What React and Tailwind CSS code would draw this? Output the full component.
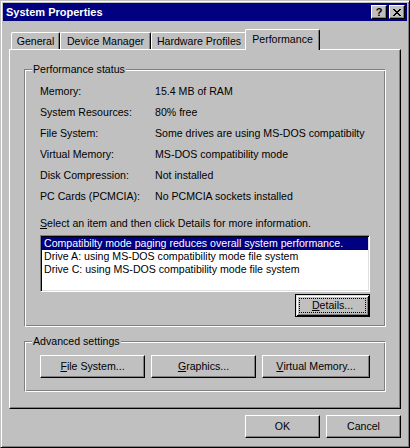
import React from 'react';

const RAISED = 'border border-t-white border-l-white border-r-black border-b-black shadow-[inset_-1px_-1px_#808080]';

const Button = ({ children, className = '' }) => (
  <button className={`${RAISED} bg-[#c0c0c0] h-[23px] flex items-center justify-center leading-[13px] ${className}`}>
    {children}
  </button>
);

const DefaultButton = ({ children, className = '' }) => (
  <button
    className={`border border-black bg-[#c0c0c0] h-[23px] p-[3px] flex shadow-[inset_1px_1px_#dfdfdf,inset_-1px_-1px_#000,inset_2px_2px_#fff,inset_-2px_-2px_#808080] ${className}`}
  >
    <span className="flex-1 flex items-center justify-center border border-dotted border-black leading-[13px]">
      {children}
    </span>
  </button>
);

const Group = ({ label, children, className = '' }) => (
  <fieldset
    className={`border border-t-[#808080] border-l-[#808080] border-r-white border-b-white shadow-[inset_1px_1px_#fff,inset_-1px_-1px_#808080] ${className}`}
  >
    <legend className="ml-[7px] px-[1px] bg-[#c0c0c0] leading-[13px]">{label}</legend>
    {children}
  </fieldset>
);

const CloseGlyph = () => {
  const px = [
    [0, 0], [1, 0], [6, 0], [7, 0],
    [1, 1], [2, 1], [5, 1], [6, 1],
    [2, 2], [3, 2], [4, 2], [5, 2],
    [3, 3], [4, 3],
    [2, 4], [3, 4], [4, 4], [5, 4],
    [1, 5], [2, 5], [5, 5], [6, 5],
    [0, 6], [1, 6], [6, 6], [7, 6],
  ];
  return (
    <svg width="8" height="7" viewBox="0 0 8 7" shapeRendering="crispEdges">
      {px.map(([x, y]) => (
        <rect key={`${x}-${y}`} x={x} y={y} width="1" height="1" fill="#000" />
      ))}
    </svg>
  );
};

const statusRows = [
  ['Memory:', '15.4 MB of RAM'],
  ['System Resources:', '80% free'],
  ['File System:', 'Some drives are using MS-DOS compatibilty'],
  ['Virtual Memory:', 'MS-DOS compatibility mode'],
  ['Disk Compression:', 'Not installed'],
  ['PC Cards (PCMCIA):', 'No PCMCIA sockets installed'],
];

const listItems = [
  'Compatibilty mode paging reduces overall system performance.',
  'Drive A: using MS-DOS compatibility mode file system',
  'Drive C: using MS-DOS compatibility mode file system',
];

const tabs = [
  { label: 'General', w: 'w-[49px]' },
  { label: 'Device Manager', w: 'w-[91px]' },
  { label: 'Hardware Profiles', w: 'w-[96px]' },
];

export default function App() {
  return (
    <div className="w-[410px] h-[448px] bg-[#c0c0c0] font-['Liberation_Sans',Arial,sans-serif] text-[10.6px] text-black whitespace-nowrap">
      <div className="w-full h-full border border-t-[#c0c0c0] border-l-[#c0c0c0] border-r-black border-b-black shadow-[inset_1px_1px_#fff,inset_-1px_-1px_#808080] p-[2px] flex flex-col">
        {/* Title bar */}
        <div className="h-[18px] bg-[#000080] flex items-center pl-[3px] pr-[2px]">
          <span className="flex-1 text-white font-bold text-[11px] leading-[18px]">System Properties</span>
          <div className="flex gap-[2px]">
            <button className={`${RAISED} bg-[#c0c0c0] w-[16px] h-[14px] flex items-center justify-center font-bold text-[11px] leading-[11px]`}>
              ?
            </button>
            <button className={`${RAISED} bg-[#c0c0c0] w-[16px] h-[14px] flex items-center justify-center`}>
              <CloseGlyph />
            </button>
          </div>
        </div>

        <div className="px-[6px] flex flex-col">
          {/* Tabs */}
          <div className="mt-[8px] h-[20px] flex items-end pl-[2px]">
            {tabs.map((t) => (
              <div
                key={t.label}
                className={`${t.w} h-[17px] border-t border-l border-r border-t-white border-l-white border-r-black shadow-[inset_-1px_0_#808080] rounded-t-[2px] text-center leading-[13px] pt-[2px]`}
              >
                {t.label}
              </div>
            ))}
            <div className="relative z-10 ml-[-2px] mb-[-1px] w-[75px] h-[21px] bg-[#c0c0c0] border-t border-l border-r border-t-white border-l-white border-r-black shadow-[inset_-1px_0_#808080] rounded-t-[2px] text-center leading-[13px] pt-[3px]">
              Performance
            </div>
          </div>

          {/* Panel */}
          <div className="h-[360px] border border-t-white border-l-white border-r-black border-b-black shadow-[inset_-1px_-1px_#808080] px-[14px] pt-[13px]">
            <Group label="Performance status">
              <div className="pl-[15px] pr-[15px] pt-[5px] pb-[9px]">
                {statusRows.map(([k, v]) => (
                  <div key={k} className="flex h-[21px] leading-[21px]">
                    <span className="w-[115px] shrink-0">{k}</span>
                    <span>{v}</span>
                  </div>
                ))}
                <div className="mt-[10px] leading-[13px]">
                  <span className="underline">S</span>elect an item and then click Details for more information.
                </div>
                <div className="mt-[5px] w-[330px] h-[57px] bg-white border border-t-[#808080] border-l-[#808080] border-r-white border-b-white shadow-[inset_1px_1px_#000,inset_-1px_-1px_#dfdfdf] p-[1px]">
                  {listItems.map((item, i) => (
                    <div
                      key={item}
                      className={`h-[13px] leading-[13px] pl-[2px] ${i === 0 ? 'bg-[#000080] text-white' : ''}`}
                    >
                      {item}
                    </div>
                  ))}
                </div>
                <div className="mt-[2px] flex justify-end">
                  <DefaultButton className="w-[75px]">
                    <span className="underline">D</span>etails...
                  </DefaultButton>
                </div>
              </div>
            </Group>

            <Group label="Advanced settings" className="mt-[8px]">
              <div className="flex gap-[6px] pl-[15px] pt-[7px] pb-[13px]">
                <Button className="w-[105px]">
                  <span className="underline">F</span>ile System...
                </Button>
                <Button className="w-[105px]">
                  <span className="underline">G</span>raphics...
                </Button>
                <Button className="w-[108px]">
                  <span className="underline">V</span>irtual Memory...
                </Button>
              </div>
            </Group>
          </div>

          {/* Footer */}
          <div className="mt-[6px] flex justify-end gap-[6px]">
            <Button className="w-[75px]">OK</Button>
            <Button className="w-[75px]">Cancel</Button>
          </div>
        </div>
      </div>
    </div>
  );
}
